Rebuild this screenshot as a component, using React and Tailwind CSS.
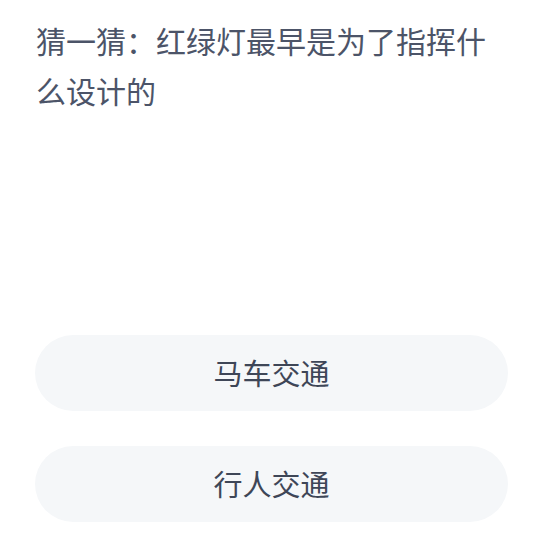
import React from 'react';

const options = ['马车交通', '行人交通'];

export default function App() {
    return (
        <div
            className="w-[535px] h-[533px] bg-white px-[35px] pt-[15px] flex flex-col"
            style={{ fontFamily: '"Noto Sans CJK SC", "Noto Sans", sans-serif' }}
        >
            <p className="text-[30px] leading-[50px] text-[#4c5468] pl-[1px]">
                猜一猜：红绿灯最早是为了指挥什么设计的
            </p>
            <div className="mt-auto mb-[11px] flex flex-col gap-[35px]">
                {options.map((label) => (
                    <div
                        key={label}
                        className="h-[76px] w-[473px] rounded-full bg-[#f5f7f9] flex items-center justify-center text-[29px] text-[#3e4657]"
                    >
                        {label}
                    </div>
                ))}
            </div>
        </div>
    );
}
